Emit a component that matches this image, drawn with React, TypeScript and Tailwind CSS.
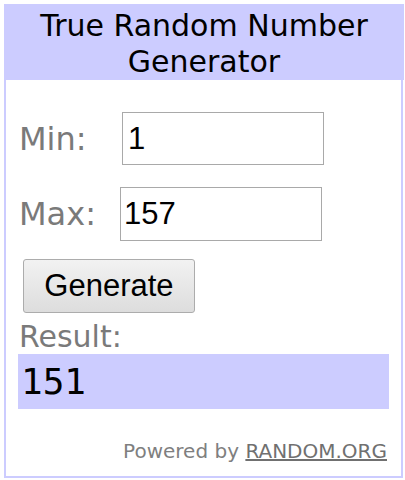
import { useState } from 'react';

// Widget colours taken from the screenshot
const lilac = 'bg-[#ccccff]';

const App: React.FC = () => {
  const [min, setMin] = useState('1');
  const [max, setMax] = useState('157');
  const [result, setResult] = useState('151');

  const generate = () => {
    const lo = parseInt(min, 10);
    const hi = parseInt(max, 10);
    if (isNaN(lo) || isNaN(hi) || hi < lo) return;
    setResult(String(lo + Math.floor(Math.random() * (hi - lo + 1))));
  };

  return (
    <div className="h-[480px] w-[405px] bg-white pl-[4px] pt-[4px]" style={{}}>
      <div className="flex h-[474px] w-[399px] flex-col">
        <div
          className={`${lilac} h-[76px] w-[400px] pt-[4px] text-center text-[30px] leading-[36px] text-black`}
          style={{ fontFamily: '"DejaVu Sans", Verdana, sans-serif' }}
        >
          True Random Number
          <br />
          Generator
        </div>

        <div
          className="flex flex-1 flex-col border-x-2 border-b-2 border-[#ccccff] pl-[12px] pr-[12px]"
          style={{ fontFamily: '"DejaVu Sans", Verdana, sans-serif' }}
        >
          <div className="mt-[32px] flex items-center">
            <span className="w-[104px] pl-[1px] text-[32px] leading-[36px] text-[#7a7a7a]">Min:</span>
            <input
              value={min}
              onChange={e => setMin(e.target.value)}
              className="h-[53px] w-[202px] border border-[#a9a9a9] px-[5px] text-[31px] text-black outline-none"
              style={{ fontFamily: '"Liberation Sans", Arial, sans-serif' }}
            />
          </div>

          <div className="mt-[22px] flex items-center">
            <span className="w-[102px] pl-[1px] text-[32px] leading-[36px] text-[#7a7a7a]">Max:</span>
            <input
              value={max}
              onChange={e => setMax(e.target.value)}
              className="h-[54px] w-[202px] border border-[#a9a9a9] px-[3px] text-[31px] text-black outline-none"
              style={{ fontFamily: '"Liberation Sans", Arial, sans-serif' }}
            />
          </div>

          <button
            onClick={generate}
            className="mt-[18px] ml-[5px] h-[54px] w-[172px] rounded-[3px] border border-[#acacac] bg-gradient-to-b from-[#f2f2f2] to-[#dddddd] text-[31px] text-black"
            style={{ fontFamily: '"Liberation Sans", Arial, sans-serif' }}
          >
            Generate
          </button>

          <div className="mt-[6px] h-[35px] pl-[1px] text-[30px] leading-[36px] text-[#7a7a7a]">Result:</div>

          <div
            className={`${lilac} h-[55px] pl-[3px] text-[36px] leading-[55px] text-black`}
            style={{ fontFamily: '"DejaVu Sans Mono", "Lucida Console", monospace' }}
          >
            {result}
          </div>

          <div className="mt-[30px] pr-[2px] text-right text-[20px] leading-[24px] text-[#7f7f7f]">
            Powered by <span className="text-[#707070] underline">RANDOM.ORG</span>
          </div>
        </div>
      </div>
    </div>
  );
};

export default App;
